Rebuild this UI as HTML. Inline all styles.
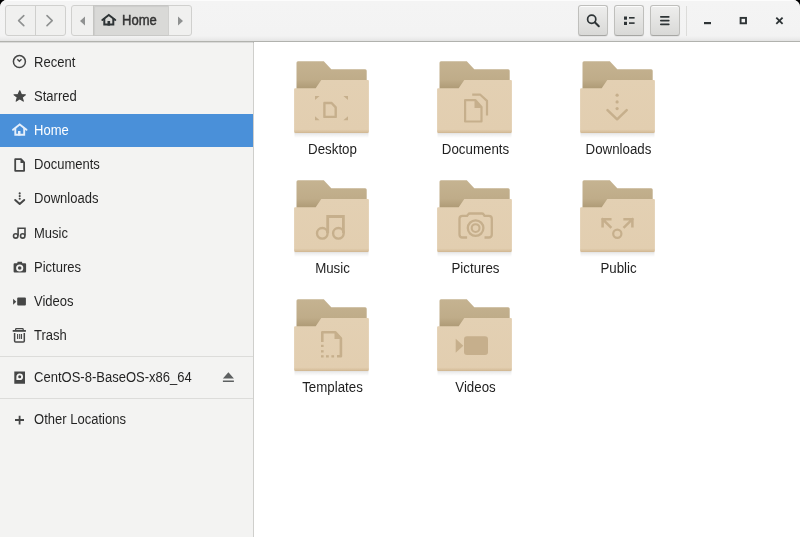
<!DOCTYPE html>
<html><head><meta charset="utf-8">
<style>
*{box-sizing:border-box;margin:0;padding:0}
html,body{width:800px;height:537px;overflow:hidden;background:#000}
body{font-family:"Liberation Sans",sans-serif;font-size:13px;color:#1f2324;position:relative}
#win{position:absolute;left:0;top:0;width:800px;height:537px;border-radius:7px 7px 0 0;overflow:hidden;background:#fff}
#hdr{position:absolute;left:0;top:0;width:800px;height:42px;background:linear-gradient(to bottom,#f4f4f4 0,#f3f3f3 36px,#ebebeb 39px,#e3e3e2 41px);border-bottom:1px solid #b1b2ae;box-shadow:inset 0 1px rgba(255,255,255,.7)}
.btn{position:absolute;border:1px solid #bfbfbc;border-bottom-color:#a6a6a3;border-radius:3px;background:linear-gradient(#eeeeed,#d9d9d7);box-shadow:inset 0 1px rgba(255,255,255,.8),0 1px 1px rgba(0,0,0,.06)}
.btn.dis{border-color:#d0d0ce;background:#f0f0ef;box-shadow:none}
.pathhome{position:absolute;background:#d9d9d7;border-left:1px solid #c5c5c2;border-right:1px solid #d0d0ce;box-shadow:inset 1px 1px 1px rgba(0,0,0,.06);border-top:1px solid #c6c6c4;border-bottom:1px solid #c9c9c7}
#side{position:absolute;left:0;top:42px;width:253px;height:495px;background:#f3f3f2}
#vsep{position:absolute;left:253px;top:42px;width:2px;height:495px;background:linear-gradient(to right,#cfcfcc 50%,#e7e7e5 50%)}
#hshadow{position:absolute;left:0;top:42px;width:800px;height:1px;background:rgba(0,0,0,.1)}
#main{position:absolute;left:254px;top:42px;width:546px;height:495px;background:#fff}
.row{position:absolute;left:0;width:253px;height:34px}
.row .t{position:absolute;left:34px;top:8px;line-height:16px;white-space:nowrap;font-size:14px;transform:scaleX(.93);transform-origin:0 0}
.row svg{position:absolute;left:11px;top:9px}
.sel{background:#4a90d9;color:#fff}
.row:not(.sel) .t,.lbl,.gs{filter:grayscale(1)}
.hsep{position:absolute;left:0;width:253px;height:1px;background:#dcdcda}
.lbl{position:absolute;width:143px;text-align:center;line-height:16px;color:#1d1f20;white-space:nowrap;font-size:14px;transform:scaleX(.95)}
</style></head><body>
<div id="win">
  <div id="hdr">
    <div class="btn dis" style="left:5px;top:5px;width:61px;height:31px"></div>
    <div style="position:absolute;left:35px;top:6px;width:1px;height:29px;background:#cfcfcd"></div>
    <div class="btn dis" style="left:71px;top:5px;width:121px;height:31px"></div>
    <div class="pathhome" style="left:93px;top:5px;width:76px;height:31px"></div>
    <div class="btn" style="left:578px;top:5px;width:30px;height:31px"></div>
    <div class="btn" style="left:614px;top:5px;width:30px;height:31px"></div>
    <div class="btn" style="left:650px;top:5px;width:30px;height:31px"></div>
    <div style="position:absolute;left:686px;top:6px;width:1px;height:30px;background:#dcdcda"></div>
    <span class="gs" style="position:absolute;left:121.5px;top:12px;line-height:16px;font-size:14px;color:#2e3436;-webkit-text-stroke:.45px #2e3436;transform:scaleX(.93);transform-origin:0 0">Home</span>
    <svg style="position:absolute;left:0;top:0" width="800" height="42" viewBox="0 0 800 42">
      <g fill="none" stroke="#8f9191" stroke-width="1.6" stroke-linecap="round" stroke-linejoin="round">
        <path d="M23.8 15.6 L18.6 20.6 L23.8 25.6"/>
        <path d="M47 15.6 L52.2 20.6 L47 25.6"/>
      </g>
      <path d="M85 16.6 L80 21 L85 25.4Z" fill="#8f9191"/>
      <path d="M178 16.6 L183 21 L178 25.4Z" fill="#8f9191"/>
      <g fill="none" stroke="#2e3436" stroke-width="2">
        <path d="M102.3 20 L108.8 15 L115.3 20" stroke-linecap="round" stroke-linejoin="miter"/>
        <path d="M104.3 18.3 V24.6 H113.3 V18.3"/>
      </g>
      <rect x="107.5" y="21" width="2.6" height="4.6" fill="#2e3436"/>
      <g fill="none" stroke="#2e3436" stroke-width="1.7">
        <circle cx="591.7" cy="19.2" r="4.1"/>
        <path d="M594.8 22.3 L598.8 26.3" stroke-width="2" stroke-linecap="round"/>
      </g>
      <g fill="#2e3436">
        <rect x="624" y="16.5" width="3" height="3.2"/>
        <rect x="624" y="21.8" width="3" height="3.2"/>
        <rect x="629" y="17" width="5.6" height="1.6"/>
        <rect x="629" y="22.3" width="5.6" height="1.6"/>
        <rect x="660" y="16" width="9.6" height="1.8" rx=".8"/>
        <rect x="660" y="19.7" width="9.6" height="1.8" rx=".8"/>
        <rect x="660" y="23.4" width="9.6" height="1.8" rx=".8"/>
        <rect x="704" y="22" width="7" height="2.2"/>
        <rect x="740.6" y="17.9" width="5.4" height="5.4" fill="none" stroke="#2e3436" stroke-width="1.9"/>
      </g>
      <path d="M776.3 17.6 L782.6 23.9 M782.6 17.6 L776.3 23.9" stroke="#2e3436" stroke-width="1.8" stroke-linecap="butt"/>
    </svg>
  </div>
  <div id="side">
    <div class="row" style="top:4px"><span class="t">Recent</span></div>
    <div class="row" style="top:38px"><span class="t">Starred</span></div>
    <div class="row sel" style="top:72px;height:33px"><span class="t">Home</span></div>
    <div class="row" style="top:106px"><span class="t">Documents</span></div>
    <div class="row" style="top:140px"><span class="t">Downloads</span></div>
    <div class="row" style="top:175px"><span class="t">Music</span></div>
    <div class="row" style="top:209px"><span class="t">Pictures</span></div>
    <div class="row" style="top:243px"><span class="t">Videos</span></div>
    <div class="row" style="top:277px"><span class="t">Trash</span></div>
    <div class="hsep" style="top:314px"></div>
    <div class="row" style="top:319px"><span class="t">CentOS-8-BaseOS-x86_64</span></div>
    <div class="hsep" style="top:356px"></div>
    <div class="row" style="top:361px"><span class="t">Other Locations</span></div>
  </div>
  <div id="vsep"></div>
  <div id="hshadow"></div>
  <svg style="position:absolute;left:0;top:0" width="254" height="537" viewBox="0 0 254 537">
    <g fill="none" stroke="#454646" stroke-width="1.5">
      <circle cx="19.4" cy="61.6" r="6"/>
      <path d="M17.3 59.2 L19.4 61.3 L21.5 59.2" stroke-width="1.4"/>
    </g>
    <path fill="#454646" stroke="#454646" stroke-width="1.1" stroke-linejoin="round" d="M19.75 90.7 L21.4 94.5 L25.4 94.7 L22.2 97.3 L23.3 101.1 L19.75 98.9 L16.2 101.1 L17.3 97.3 L14.1 94.7 L18.1 94.5Z"/>
    <g fill="none" stroke="#e4eefa" stroke-width="1.9">
      <path d="M13 129.8 L19.7 124.5 L26.5 129.8" stroke-linecap="round"/>
      <path d="M15.3 128 V134.8 H24.2 V128"/>
    </g>
    <rect x="18" y="131" width="2.5" height="4.5" fill="#e4eefa"/>
    <g fill="none" stroke="#454646" stroke-width="1.8" stroke-linejoin="round">
      <path d="M15.2 159.2 H21 L24.1 162.4 V170.8 H15.2Z"/>
    </g>
    <path d="M20.5 158.5 V163 H25 Z" fill="#454646"/>
    <g fill="#454646">
      <circle cx="19.7" cy="193.4" r="1.05"/>
      <circle cx="19.7" cy="196.1" r="1.05"/>
      <circle cx="19.7" cy="198.8" r="1.05"/>
    </g>
    <path d="M15.2 200 L19.7 204 L24.2 200" fill="none" stroke="#454646" stroke-width="2" stroke-linecap="round" stroke-linejoin="round"/>
    <g fill="none" stroke="#454646" stroke-width="1.6">
      <path d="M18.1 235.5 V228.2 H25 V235.5"/>
      <circle cx="15.7" cy="235.9" r="2.2"/>
      <circle cx="22.7" cy="235.9" r="2.2"/>
    </g>
    <path fill="#454646" fill-rule="evenodd" d="M13.6 264.2 Q13.6 263.2 14.6 263.2 H17.2 L17.6 261.8 H21.9 L22.3 263.2 H25.1 Q26.1 263.2 26.1 264.2 V271.5 Q26.1 272.5 25.1 272.5 H14.6 Q13.6 272.5 13.6 271.5Z M19.7 264.4 A3.6 3.6 0 1 0 19.7 271.6 A3.6 3.6 0 1 0 19.7 264.4Z"/><circle cx="19.7" cy="268" r="1.8" fill="#454646"/>
    <path fill="#454646" d="M13.1 298.7 L16.3 301.75 L13.1 304.8Z"/>
    <rect x="17.2" y="297.6" width="8.7" height="7.8" rx="1" fill="#454646"/>
    <g fill="none" stroke="#454646">
      <path d="M12.7 330.9 H25.9" stroke-width="1.8"/>
      <path d="M15.6 330.5 V329.4 Q15.6 328.6 16.4 328.6 H22.4 Q23.2 328.6 23.2 329.4 V330.5" stroke-width="1.3"/>
      <path d="M14.6 333 V341 Q14.6 342 15.6 342 H23.3 Q24.3 342 24.3 341 V333" stroke-width="1.5"/>
      <path d="M17.6 334 V339 M19.7 334 V339 M21.5 334 V339" stroke-width="1.1"/>
    </g>
    <path fill="#454646" fill-rule="evenodd" d="M14.3 371.5 H25 V383.8 H14.3Z M19.7 373.4 A3.35 3.35 0 1 1 19.7 380.1 H16.4 V376.8 A3.35 3.35 0 0 1 19.7 373.4Z M19.7 375.3 A1.5 1.5 0 1 0 19.7 378.3 A1.5 1.5 0 1 0 19.7 375.3Z"/>
    <path d="M222.9 378.4 L228.4 372.2 L233.9 378.4Z M222.9 380.4 H233.9 V382 H222.9Z" fill="#5d6061"/>
    <path d="M15 420 H24 M19.6 415.7 V424.4" stroke="#454646" stroke-width="1.8" fill="none"/>
  </svg>
  <div id="main"></div>
  <svg style="position:absolute;left:0;top:0" width="800" height="537" viewBox="0 0 800 537">
<defs>
<linearGradient id="bk" x1="0" y1="0" x2="0" y2="1"><stop offset="0" stop-color="#c5b391"/><stop offset="0.6" stop-color="#bfac89"/><stop offset="1" stop-color="#a8946f"/></linearGradient>
<linearGradient id="fr" x1="0" y1="0" x2="0" y2="1"><stop offset="0" stop-color="#e3d0b3"/><stop offset="0.93" stop-color="#e2ceb0"/><stop offset="0.97" stop-color="#d9c2a0"/><stop offset="1" stop-color="#cfb58f"/></linearGradient>
<linearGradient id="sh" x1="0" y1="0" x2="0" y2="1"><stop offset="0" stop-color="#000" stop-opacity=".13"/><stop offset=".4" stop-color="#000" stop-opacity=".06"/><stop offset="1" stop-color="#000" stop-opacity="0"/></linearGradient>
<g id="fold">
<rect x="9.5" y="80.5" width="74" height="5.5" fill="url(#sh)"/>
<path d="M11.5 10.7 Q11.5 9.2 13 9.2 H38.8 L46.3 17.3 H80.2 Q81.7 17.3 81.7 18.8 V40 H11.5Z" fill="url(#bk)"/>
<path d="M9.1 37.2 Q9.1 36.2 10.1 36.2 H30.7 L36.3 28 H82.9 Q83.9 28 83.9 29 V79.6 Q83.9 81.1 82.4 81.1 H10.6 Q9.1 81.1 9.1 79.6Z" fill="url(#fr)"/>
</g>
</defs>
<g transform="translate(285,52)"><use href="#fold"/><path d="M30 44 H34.6 L30 48Z M63 44 H58.4 L63 48Z M30 68.3 H34.6 L30 64.2Z M63 68.3 H58.4 L63 64.2Z" fill="#c6af8c"/>
<path d="M39.4 51 H46.6 L50.7 55.4 V64.9 H39.4Z" fill="none" stroke="#c6af8c" stroke-width="2.4" stroke-linejoin="round"/></g>
<g transform="translate(428,52)"><use href="#fold"/><path d="M37.1 48.1 H47.5 L53.5 55 V69.5 H37.1Z" fill="none" stroke="#c6af8c" stroke-width="2.2" stroke-linejoin="round"/>
<path d="M46.5 47.3 V56 H54.4Z" fill="#c6af8c"/>
<path d="M44.2 42.7 H52.3 L59 48.9 V63.6" fill="none" stroke="#c6af8c" stroke-width="2.2" stroke-linejoin="round"/></g>
<g transform="translate(571,52)"><use href="#fold"/><g fill="#c6af8c"><circle cx="46.1" cy="43.2" r="1.6"/><circle cx="46.1" cy="49.9" r="1.6"/><circle cx="46.1" cy="56.6" r="1.6"/></g>
<path d="M36.5 58.2 L46.1 67.3 L55.7 58.2" fill="none" stroke="#c6af8c" stroke-width="2.5" stroke-linecap="round" stroke-linejoin="round"/></g>
<g transform="translate(285,171)"><use href="#fold"/><path d="M42.7 62 V45.5 H58.4 V62" fill="none" stroke="#c6af8c" stroke-width="2.8"/>
<circle cx="37.3" cy="62.3" r="5.3" fill="none" stroke="#c6af8c" stroke-width="2.4"/>
<circle cx="53.4" cy="62.3" r="5.3" fill="none" stroke="#c6af8c" stroke-width="2.4"/></g>
<g transform="translate(428,171)"><use href="#fold"/><path d="M39.1 66.5 H34.5 Q31.5 66.5 31.5 63.5 V47.8 Q31.5 44.8 34.5 44.8 H39.1 L40.2 43.4 Q40.8 42.5 42 42.5 H53.8 Q55 42.5 55.6 43.4 L56.5 44.8 H60.8 Q63.8 44.8 63.8 47.8 V63.5 Q63.8 66.5 60.8 66.5 H56.5" fill="none" stroke="#c6af8c" stroke-width="2.3"/>
<circle cx="47.6" cy="57.1" r="7.8" fill="none" stroke="#c6af8c" stroke-width="2.3"/>
<circle cx="47.6" cy="57.1" r="3.9" fill="none" stroke="#c6af8c" stroke-width="2.1"/></g>
<g transform="translate(571,171)"><use href="#fold"/><g fill="none" stroke="#c6af8c" stroke-width="2.5" stroke-linecap="square">
<path d="M31.6 48.2 H39.3 M31.6 48.2 V55.3 M31.6 48.2 L39.5 56.1"/>
<path d="M61.4 48.2 H53.6 M61.4 48.2 V55.3 M61.4 48.2 L53.4 56.1"/>
</g>
<circle cx="46.3" cy="62.8" r="4.1" fill="none" stroke="#c6af8c" stroke-width="2.2"/></g>
<g transform="translate(285,290)"><use href="#fold"/><path d="M37.3 52 V42.3 H50.4 L55.9 48.4 V66.2 H52" fill="none" stroke="#c6af8c" stroke-width="2.6" stroke-linejoin="round"/>
<path d="M49.5 41.2 V49 H57.2Z" fill="#c6af8c"/>
<g fill="#c6af8c"><rect x="36" y="54.8" width="2.6" height="2.2"/><rect x="36" y="60.2" width="2.6" height="2.3"/><rect x="36" y="65.2" width="2.6" height="2.3"/><rect x="41" y="65.2" width="2.8" height="2.3"/><rect x="46.4" y="65.2" width="2.7" height="2.3"/></g></g>
<g transform="translate(428,290)"><use href="#fold"/><path d="M27.7 48.8 L35.3 55.7 L27.7 62.7Z" fill="#c6af8c"/>
<rect x="36" y="46.2" width="24" height="18.7" rx="3" fill="#c6af8c"/></g></svg>
  <div class="lbl" style="left:261px;top:141px">Desktop</div>
  <div class="lbl" style="left:404px;top:141px">Documents</div>
  <div class="lbl" style="left:547px;top:141px">Downloads</div>
  <div class="lbl" style="left:261px;top:260px">Music</div>
  <div class="lbl" style="left:404px;top:260px">Pictures</div>
  <div class="lbl" style="left:547px;top:260px">Public</div>
  <div class="lbl" style="left:261px;top:379px">Templates</div>
  <div class="lbl" style="left:404px;top:379px">Videos</div>
</div>
</body></html>
